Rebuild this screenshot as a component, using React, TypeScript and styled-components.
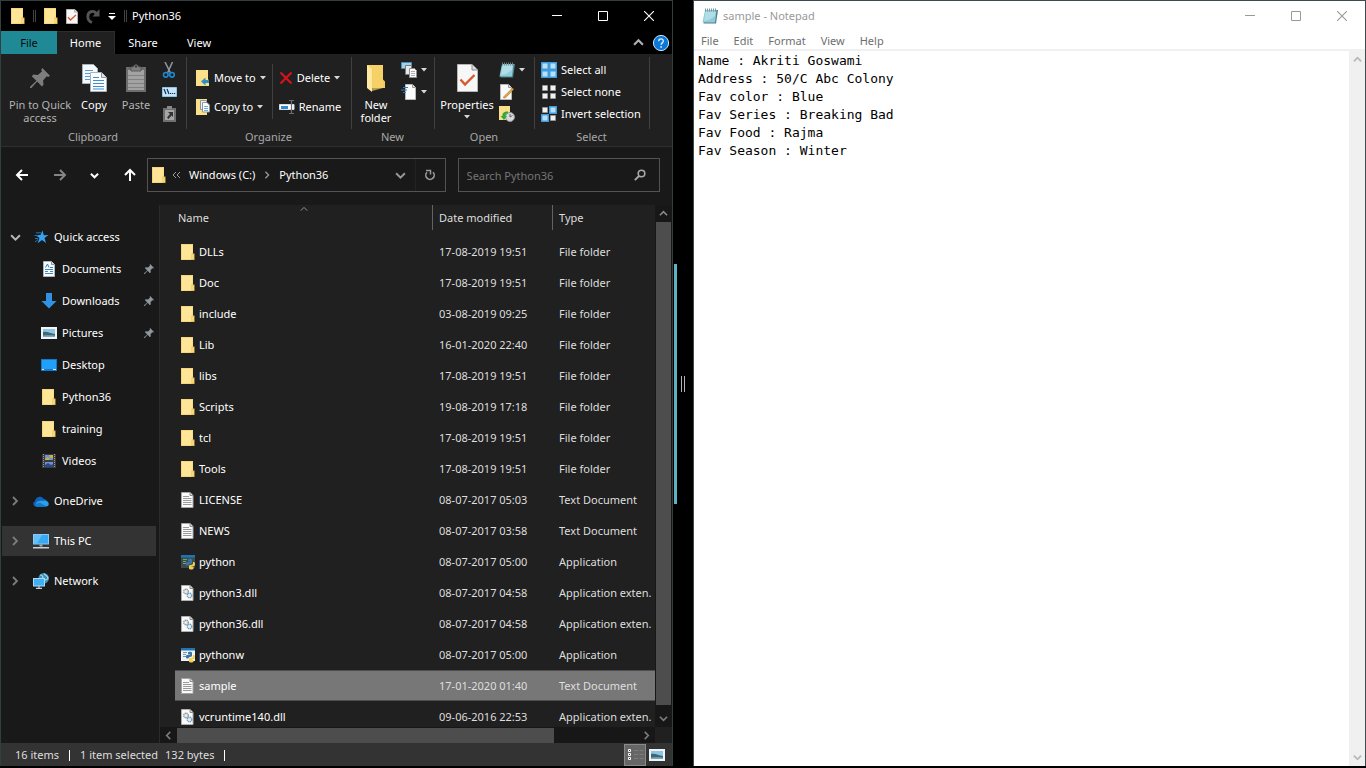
import React from "react";
import styled, { createGlobalStyle, css } from "styled-components";

const Global = createGlobalStyle`
  *, *::before, *::after { box-sizing: border-box; }
  body { margin: 0; background: #000; }
  button, input, textarea { font: inherit; color: inherit; }
  button { border: 0; padding: 0; background: none; }
  svg { display: block; flex: none; }
`;

/* ---------- desktop ---------- */

const Desktop = styled.main`
  display: grid;
  grid-template-columns: minmax(0, 1fr) 20px minmax(0, 1fr);
  height: 100vh;
  padding-bottom: 2px;
  background: #000;
  font-family: "Noto Sans", "Open Sans", sans-serif;
  font-size: 11px;
  line-height: 16px;
`;

const Splitter = styled.div`
  display: flex;
  align-items: center;
  gap: 4px;
  padding: 2px 0 0 1px;
`;
const SplitterTrack = styled.span`
  width: 3px;
  height: 240px;
  background: #5cb3c4;
`;
const SplitterGrip = styled.span`
  width: 4px;
  height: 16px;
  border: solid #b4b4b4;
  border-width: 0 1px;
`;

const WindowControls = styled.div`
  display: flex;
  align-self: stretch;
  margin-left: auto;
`;
const ControlButton = styled.button`
  display: grid;
  place-items: center;
  width: 46px;
`;

/* ---------- explorer ---------- */

const Explorer = styled.section`
  display: flex;
  flex-direction: column;
  min-height: 0;
  border: solid #343e40;
  border-width: 1px 1px 0;
  background: #191919;
  color: #fff;
`;

const TitleBar = styled.header`
  display: flex;
  align-items: center;
  height: 30px;
  flex: none;
  padding-left: 10px;
  background: #000;
`;
const TitleText = styled.h1`
  margin: 0 0 0 5px;
  font-size: 11px;
  font-weight: 400;
`;
const QuickTools = styled.div`
  display: flex;
  align-items: center;
  gap: 8px;
`;
const ToolButton = styled.button`
  display: grid;
  place-items: center;
`;
const TitleDivider = styled.span`
  width: 3px;
  height: 12px;
  border: solid #444;
  border-width: 0 1px;
`;

const TabRow = styled.nav`
  display: flex;
  align-items: stretch;
  height: 23px;
  flex: none;
  background: #000;
`;
const Tab = styled.button<{ $kind?: "file" | "active" }>`
  width: ${(p) => (p.$kind === "active" ? 58 : 56)}px;
  ${(p) =>
    p.$kind === "file" &&
    css`
      background: #1f8a96;
      color: #0a0a0a;
    `}
  ${(p) =>
    p.$kind === "active" &&
    css`
      background: #202020;
      border: solid #2d2d2d;
      border-width: 1px 1px 0 0;
    `}
`;
const TabTools = styled.div`
  display: flex;
  align-items: center;
  gap: 8px;
  margin-left: auto;
  padding-right: 2px;
`;

const Ribbon = styled.div`
  display: flex;
  height: 93px;
  flex: none;
  padding-top: 3px;
  background: #202020;
  border-bottom: 1px solid #2e2e2e;
`;
const RibbonGroup = styled.section<{ $width: number }>`
  display: flex;
  flex-direction: column;
  width: ${(p) => p.$width}px;
  flex: none;
`;
const GroupBody = styled.div<{ $pad?: number }>`
  display: flex;
  height: 72px;
  padding-left: ${(p) => p.$pad ?? 0}px;
  border-right: 1px solid #404040;
`;
const GroupLabel = styled.h2`
  margin: 0;
  padding-right: 2px;
  font-size: 11px;
  font-weight: 400;
  text-align: center;
  color: #a8a8a8;
`;
const LargeButton = styled.button<{ $width: number; $dim?: boolean }>`
  display: flex;
  flex-direction: column;
  align-items: center;
  width: ${(p) => p.$width}px;
  padding-top: 5px;
  line-height: 13px;
  color: ${(p) => (p.$dim ? "#b4b4b4" : "#fff")};
  white-space: nowrap;
`;
const LargeIcon = styled.span`
  display: grid;
  place-items: center;
  width: 32px;
  height: 32px;
  margin-bottom: 4px;
`;
const LargeDrop = styled.span`
  padding-top: 4px;
`;
const SmallColumn = styled.div<{ $gap?: number; $inset?: number }>`
  display: flex;
  flex-direction: column;
  gap: ${(p) => p.$gap ?? 4}px;
  padding: ${(p) => (p.$gap ? 12 : 4)}px 0 0 ${(p) => p.$inset ?? 6}px;
`;
const SmallButton = styled.button`
  display: flex;
  align-items: center;
  gap: 4px;
  height: 18px;
  white-space: nowrap;
`;
const InnerDivider = styled.span`
  width: 1px;
  height: 55px;
  margin: 7px 0 0 6px;
  background: #404040;
`;

const AddressRow = styled.div`
  display: flex;
  align-items: center;
  height: 58px;
  flex: none;
  padding: 0 12px 2px 14px;
`;
const History = styled.div`
  display: flex;
  align-items: center;
  justify-content: space-between;
  width: 122px;
  margin-right: 10px;
  flex: none;
`;
const AddressBar = styled.div`
  display: flex;
  align-items: center;
  flex: 299 1 0;
  min-width: 0;
  height: 34px;
  border: 1px solid #535353;
`;
const Crumbs = styled.nav`
  display: flex;
  align-items: center;
  gap: 8px;
  flex: 1;
  margin-left: 4px;
`;
const CrumbTrail = styled.span`
  display: flex;
  align-items: center;
  gap: 6px;
`;
const Crumb = styled.a`
  color: #fff;
  text-decoration: none;
  white-space: nowrap;
`;
const AddressTool = styled.button<{ $divided?: boolean }>`
  display: grid;
  place-items: center;
  width: 30px;
  height: 32px;
  border-left: 1px solid ${(p) => (p.$divided ? "#232323" : "transparent")};
`;
const SearchBox = styled.label`
  display: flex;
  align-items: center;
  flex: 202 1 0;
  min-width: 0;
  height: 34px;
  margin-left: 12px;
  border: 1px solid #535353;
`;
const SearchInput = styled.input`
  flex: 1;
  min-width: 0;
  height: 32px;
  padding: 0 0 0 8px;
  border: 0;
  outline: 0;
  background: none;
  &::placeholder { color: #767676; opacity: 1; }
`;
const SearchMark = styled.span`
  margin-right: 13px;
`;

const Body = styled.div`
  display: flex;
  flex: 1;
  min-height: 0;
`;
const Sidebar = styled.nav`
  display: flex;
  flex-direction: column;
  gap: 10px;
  width: 159px;
  flex: none;
  padding: 17px 3px 0 1px;
  border-right: 1px solid #2b2b2b;
`;
const SideGroup = styled.ul`
  display: flex;
  flex-direction: column;
  gap: 2px;
  margin: 0;
  padding: 0;
  list-style: none;
`;
const SideLink = styled.a<{ $nested?: boolean; $selected?: boolean }>`
  display: flex;
  align-items: center;
  height: 30px;
  padding-left: ${(p) => (p.$nested ? 39 : 7)}px;
  background: ${(p) => (p.$selected ? "#333" : "none")};
  color: #fff;
  text-decoration: none;
`;
const SideChevron = styled.span`
  display: grid;
  place-items: center;
  width: 12px;
  margin-right: 12px;
`;
const SideName = styled.span`
  flex: 1;
  margin-left: 5px;
`;
const PinSlot = styled.span`
  margin-right: 2px;
`;

const FilePane = styled.div`
  display: flex;
  flex-direction: column;
  flex: 1;
  min-width: 0;
  background: #202020;
`;
const FileArea = styled.div`
  display: flex;
  flex: 1;
  min-height: 0;
`;
const FileScroll = styled.div`
  flex: 1;
  min-width: 0;
  overflow: hidden;
  padding-left: 15px;
`;
const FileTable = styled.table`
  width: 100%;
  table-layout: fixed;
  border-collapse: collapse;
`;
const HeadCell = styled.th<{ $width?: number }>`
  width: ${(p) => (p.$width ? `${p.$width}px` : "auto")};
  height: 31px;
  padding: 0;
  vertical-align: top;
  font-weight: 400;
  text-align: left;
  color: #dedede;
`;
const HeadInner = styled.div<{ $first?: boolean }>`
  position: relative;
  height: 25px;
  padding-left: ${(p) => (p.$first ? 2 : 6)}px;
  border-left: 1px solid ${(p) => (p.$first ? "transparent" : "#636363")};
  line-height: 25px;
`;
const SortMark = styled.span`
  position: absolute;
  top: 0;
  left: 0;
  right: 0;
  display: flex;
  justify-content: center;
`;
const FileRow = styled.tr<{ $selected?: boolean }>`
  height: 31px;
  background: ${(p) => (p.$selected ? "#777" : "none")};
  box-shadow: ${(p) => (p.$selected ? "inset 0 1px #4d4d4d, inset 0 -1px #4d4d4d" : "none")};
`;
const FileCell = styled.td`
  padding: 0 0 0 7px;
  overflow: hidden;
  white-space: nowrap;
  color: #dedede;
`;
const FileName = styled.span`
  display: flex;
  align-items: center;
  gap: 4px;
  margin-left: -1px;
  color: #fff;
`;

const ScrollBar = styled.div<{ $across?: boolean }>`
  display: flex;
  flex-direction: ${(p) => (p.$across ? "row" : "column")};
  flex: none;
  background: #171717;
  ${(p) =>
    p.$across
      ? css`
          height: 16px;
          margin-right: 17px;
          border-top: 1px solid #171717;
        `
      : css`
          width: 17px;
          border: solid #171717;
          border-width: 0 1px;
        `}
`;
const ScrollArrow = styled.button`
  display: grid;
  place-items: center;
  flex: 0 0 17px;
`;
const ScrollThumb = styled.span<{ $grow: number }>`
  flex: ${(p) => p.$grow} 1 0;
  background: #4d4d4d;
`;
const ScrollGap = styled.span<{ $grow: number }>`
  flex: ${(p) => p.$grow} 1 0;
`;

const StatusBar = styled.footer`
  display: flex;
  align-items: center;
  height: 23px;
  flex: none;
  padding: 1px 8px 0 14px;
  background: #333;
  color: #dedede;
`;
const StatusText = styled.span`
  margin-right: 7px;
`;
const StatusDivider = styled.span`
  width: 1px;
  height: 11px;
  margin: 0 10px 0 3px;
  background: #fff;
`;
const ViewButtons = styled.div`
  display: flex;
  align-items: center;
  gap: 3px;
  margin-left: auto;
`;
const ViewButton = styled.button<{ $active?: boolean }>`
  display: grid;
  place-items: center;
  width: ${(p) => (p.$active ? 22 : 15)}px;
  height: 22px;
  border: ${(p) => (p.$active ? "1px solid #8a8a8a" : "0")};
  background: ${(p) => (p.$active ? "#666" : "none")};
`;

/* ---------- notepad ---------- */

const Notepad = styled.section`
  display: flex;
  flex-direction: column;
  min-height: 0;
  border: solid #3c4c4e;
  border-width: 1px 1px 0;
  background: #fff;
  color: #6e6e6e;
`;
const NotepadTitle = styled.header`
  display: flex;
  align-items: center;
  height: 30px;
  flex: none;
  padding-left: 8px;
  color: #999;
`;
const MenuBar = styled.nav`
  display: flex;
  gap: 15px;
  height: 20px;
  flex: none;
  padding: 1px 0 0 7px;
  border-bottom: 2px solid #f0f0f0;
`;
const NoteTitleText = styled.h1`
  margin: 0 0 0 5px;
  font-size: 11px;
  font-weight: 400;
`;
const NoteBody = styled.div`
  display: flex;
  flex: 1;
  min-height: 0;
`;
const NoteText = styled.textarea`
  flex: 1;
  min-width: 0;
  padding: 1px 4px 0;
  border: 0;
  outline: 0;
  resize: none;
  overflow: hidden;
  background: #fff;
  color: #000;
  font-family: "DejaVu Sans Mono", "Liberation Mono", monospace;
  font-size: 13px;
  line-height: 18px;
`;
const NoteScroll = styled.div`
  display: flex;
  flex-direction: column;
  justify-content: space-between;
  width: 16px;
  flex: none;
  background: #f0f0f0;
`;

/* ---------- icons ---------- */

const Folder = () => (
  <svg width="14" height="16" viewBox="0 0 14 16">
    <path d="M0 0h12v16H0z" fill="#f6d678" />
    <path d="M1 1h10.500v14H1z" fill="#ffe597" />
    <path d="M10.500 9.500h3V16h-3z" fill="#e9bf4c" />
    <path d="M12 10.500V15" stroke="#ffeeb0" strokeWidth="1" />
  </svg>
);

const BigFolder = () => (
  <svg width="20" height="28" viewBox="0 0 20 28">
    <path d="M1 1h16v14.500l2 2V24H5z" fill="#f3cc60" />
    <path d="M7 5l-1 22 11-3V1H1z" fill="#f7d36b" opacity=".7" />
    <path d="M1 1l5 4v23l-5-4z" fill="#ffe9a0" />
  </svg>
);

const CheckPage = ({ w, h }: { w: number; h: number }) => (
  <svg width={w} height={h} viewBox="0 0 21 28" preserveAspectRatio="none">
    <path d="M.5.5H15l5.500 5.500v21.500H.5z" fill="#f7f7f7" stroke="#b5b5b5" />
    <path d="M15 .5V6h5.500" fill="#dcdcdc" stroke="#8c8c8c" />
    <path d="M3.500 15.500L8 20.500 17.500 11" fill="none" stroke="#d9582b" strokeWidth="2.400" />
  </svg>
);

const Redo = () => (
  <svg width="14" height="16" viewBox="0 0 14 16">
    <path d="M10.500 6C8 1.800 1.800 3 1.800 8.500c0 2.800 1.500 5 4.200 6" fill="none" stroke="#555" strokeWidth="2.800" />
    <path d="M13.500 1v7.500H6.500z" fill="#555" />
  </svg>
);

const MoreMark = () => (
  <svg width="8" height="8" viewBox="0 0 8 8">
    <path d="M1 1.500h6" stroke="#fff" />
    <path d="M0 4h8L4 8z" fill="#fff" />
  </svg>
);

const Drop = () => (
  <svg width="6" height="4" viewBox="0 0 6 4">
    <path d="M0 0h6L3 3.500z" fill="#d8d8d8" />
  </svg>
);

const Minimize = ({ color }: { color: string }) => (
  <svg width="10" height="10" viewBox="0 0 10 10">
    <path d="M0 4.500h10" stroke={color} />
  </svg>
);
const Maximize = ({ color }: { color: string }) => (
  <svg width="10" height="10" viewBox="0 0 10 10">
    <path d="M.5.5h9v9h-9z" fill="none" stroke={color} />
  </svg>
);
const Close = ({ color }: { color: string }) => (
  <svg width="10" height="10" viewBox="0 0 10 10">
    <path d="M0 0l10 10M10 0L0 10" stroke={color} strokeWidth="1.100" />
  </svg>
);

const turns = { up: 0, right: 90, down: 180, left: 270 };
const Chevron = ({
  to,
  color,
  size = 9,
  weight = 1.8,
}: {
  to: keyof typeof turns;
  color: string;
  size?: number;
  weight?: number;
}) => (
  <svg width={size} height={size} viewBox="0 0 10 10">
    <path d="M1 7l4-4 4 4" fill="none" stroke={color} strokeWidth={weight} transform={`rotate(${turns[to]} 5 5)`} />
  </svg>
);

const Help = () => (
  <svg width="18" height="18" viewBox="0 0 18 18">
    <circle cx="9" cy="9" r="7.600" fill="#0a78d6" stroke="#cfe6f7" strokeWidth="1" />
    <path d="M6.700 7.200c0-3 4.600-3 4.600-.2 0 1.900-2.200 1.900-2.200 3.700" fill="none" stroke="#d8ecfa" strokeWidth="1.400" />
    <circle cx="9.100" cy="12.900" r=".9" fill="#d8ecfa" />
  </svg>
);

const pinShape = "M12.300 0L20 7.800l-1.800 1.100-1.500-.6-3.600 4.100.4 4.300-1.600 1.700-4.700-4.800L1.400 20 0 20l.1-1.300 6.300-5.900L1.700 8.200l1.800-1.600 4.300.5 4.100-3.600-.6-1.800z";
const Pin = ({ size, color }: { size: number; color: string }) => (
  <svg width={size} height={size} viewBox="0 0 20 20">
    <path d={pinShape} fill={color} />
  </svg>
);

const CopyPages = () => (
  <svg width="25" height="28" viewBox="0 0 25 28">
    <path d="M.5.5h11l4 4v15H.5z" fill="#f4f8fb" stroke="#aab2b8" />
    <path d="M3 6.500h8M3 9.500h8M3 12.500h5M3 15.500h5" stroke="#5a9bd0" />
    <path d="M8.500 8.500h11l5 5v14h-16z" fill="#fafcfe" stroke="#aab2b8" />
    <path d="M19.500 8.500v5h5" fill="#dde3e8" stroke="#90989e" />
    <path d="M11 13.500h6M11 16.500h11M11 19.500h11M11 22.500h11M11 25h11" stroke="#3f8fd0" />
  </svg>
);

const Clipboard = () => (
  <svg width="20" height="28" viewBox="0 0 20 28">
    <path d="M0 3h20v25H0z" fill="#6d6d6d" />
    <path d="M2 6h16v20H2z" fill="#a2a2a2" />
    <path d="M2 11.500h16M2 15.500h16M2 19.500h16M2 23.500h16" stroke="#828282" />
    <path d="M5 3h2.500C8 0 12 0 12.500 3H15v4H5z" fill="#7f7f7f" stroke="#5a5a5a" />
    <circle cx="10" cy="2.500" r="1" fill="#222" />
  </svg>
);

const Scissors = () => (
  <svg width="14" height="16" viewBox="0 0 14 16">
    <path d="M3 0l5.500 11M10.500 0L5.500 11" stroke="#8e9aa3" strokeWidth="1.500" />
    <circle cx="3.800" cy="12.800" r="2.300" fill="none" stroke="#1e87d2" strokeWidth="1.600" />
    <circle cx="10" cy="12.800" r="2.300" fill="none" stroke="#1e87d2" strokeWidth="1.600" />
  </svg>
);
const PathIcon = () => (
  <svg width="15" height="10" viewBox="0 0 15 10">
    <path d="M.5.500h14v9H.5z" fill="#c3e4fa" stroke="#8dc5ea" />
    <path d="M2 2l2 5M5 2l2 5" stroke="#12324a" strokeWidth="1.200" />
    <path d="M8 6.500h1.200M10 6.500h1.200M12 6.500h1.200" stroke="#12324a" strokeWidth="1.200" />
  </svg>
);
const ShortcutPaste = () => (
  <svg width="14" height="16" viewBox="0 0 14 16">
    <path d="M1 2h13v14H1z" fill="#6f6f6f" />
    <path d="M5 0h5v3H5z" fill="#898989" />
    <path d="M3 4h9v10H3z" fill="#a6a6a6" />
    <path d="M6 6h5v5L9.500 9.500 6.500 13 5 11.500 8 8z" fill="#333" />
  </svg>
);

const FolderArrow = () => (
  <svg width="14" height="16" viewBox="0 0 14 16">
    <path d="M0 0h12v9l1 2v5H0z" fill="#fbe08c" />
    <path d="M5 11.500L9.500 7.500v2.500H13v3H9.500v2.500z" fill="#2e8fc4" />
  </svg>
);
const FolderCopy = () => (
  <svg width="14" height="16" viewBox="0 0 14 16">
    <path d="M0 0h11v16H0z" fill="#fbe08c" />
    <path d="M4.500 1.500h6v9h-6z" fill="#eef4f8" stroke="#8c969c" />
    <path d="M6.500 3.500h4.500l2.500 2.500v7h-7z" fill="#fff" stroke="#8c969c" />
    <path d="M8 7.500h4M8 9.500h4M8 11.500h4" stroke="#4b97cf" strokeWidth=".8" />
  </svg>
);
const Cross = () => (
  <svg width="14" height="14" viewBox="0 0 14 14">
    <path d="M1.500 1.500l11 11M12.500 1.500l-11 11" stroke="#d8121c" strokeWidth="2.200" />
  </svg>
);
const RenameIcon = () => (
  <svg width="16" height="16" viewBox="0 0 16 16">
    <path d="M.5 5.500h14.500v5H.5z" fill="#fff" stroke="#d5dde2" />
    <path d="M2 7h7v3H2z" fill="#2f8bd2" />
    <path d="M10 1.500h5M10 14.500h5M12.500 1.500v13" stroke="#6d6d6d" strokeWidth="1.200" />
  </svg>
);
const NewItem = () => (
  <svg width="16" height="16" viewBox="0 0 16 16">
    <path d="M.5.5h10v6H.5z" fill="#9fd0ee" stroke="#4e8fb6" />
    <path d="M4.500 3.500h6v9h-6z" fill="#e8e8e8" stroke="#7a7a7a" />
    <path d="M8.500 6.500h5l2 2v7h-7z" fill="#fafafa" stroke="#909090" />
    <path d="M10 9.500h4M10 11.500h4M10 13.500h4" stroke="#9a9a9a" strokeWidth=".8" />
  </svg>
);
const EasyAccess = () => (
  <svg width="16" height="16" viewBox="0 0 16 16">
    <path d="M4.500.5h7l3 3v12h-10z" fill="#fbfbfb" stroke="#b8b8b8" />
    <path d="M11.500.5v3h3" fill="#ddd" stroke="#999" />
    <path d="M2 3.500h5M0 6h6M2 8.500h3" stroke="#2a7fc4" strokeWidth="1.200" />
  </svg>
);
const NotepadIcon = () => (
  <svg width="16" height="16" viewBox="0 0 16 16">
    <path d="M4 2h12l-2 13.500H1.500z" fill="#4d7f8a" />
    <path d="M3 2h11.500l-1.500 12.500H.5z" fill="#8fcbd9" />
    <path d="M3.500 3.500h10L13 8 7 12 2 13z" fill="#bfe4ec" opacity=".7" />
    <path d="M3.500 .5v3M5.500 .5v3M7.500 .5v3M9.500 .5v3M11.500 .5v3M13.500 .5v3" stroke="#6f8e96" strokeWidth=".9" />
  </svg>
);
const EditPage = () => (
  <svg width="15" height="16" viewBox="0 0 15 16">
    <path d="M1.500.5h8l3 3v12h-11z" fill="#fafafa" stroke="#b8b8b8" />
    <path d="M9.500.5v3h3" fill="#ddd" stroke="#999" />
    <path d="M5 12.500L13.500 4l1.200 1.300L6.500 13.800 4.500 14z" fill="#e6a53a" stroke="#a46f2b" strokeWidth=".6" />
  </svg>
);
const HistoryIcon = () => (
  <svg width="16" height="16" viewBox="0 0 16 16">
    <path d="M0 0h11v14H0z" fill="#fbe08c" />
    <circle cx="11" cy="11" r="4.500" fill="#d6dadd" stroke="#8d9498" />
    <path d="M11 8v3l2.500-1.500" fill="none" stroke="#555" strokeWidth=".9" />
    <path d="M9 5.500C5 5 3 7.500 3.500 10H1.500L5 14l3-4H6.500C6.500 8 7.500 7.500 9 7.500z" fill="#35a83a" />
  </svg>
);

const Tiles = ({ on }: { on: number[] }) => (
  <svg width="16" height="16" viewBox="0 0 16 16">
    {[0, 1, 2, 3].map((i) => {
      const x = (i % 2) * 8;
      const y = Math.floor(i / 2) * 8;
      const lit = on.includes(i);
      return lit ? (
        <g key={i}>
          <path d={`M${x} ${y}h8v8h-8z`} fill="#3f9bdb" />
          <path d={`M${x + 1.5} ${y + 1.5}h5v5h-5z`} fill="#b9e0fa" />
        </g>
      ) : (
        <path key={i} d={`M${x + 1.5} ${y + 1.5}h5v5h-5z`} fill="#f2f2f2" stroke="#9a9a9a" strokeWidth=".8" />
      );
    })}
  </svg>
);

const Arrow = ({ turn = 0, color = "#fff" }: { turn?: number; color?: string }) => (
  <svg width="14" height="14" viewBox="0 0 14 14">
    <path d="M13 7H2M7 2L2 7l5 5" fill="none" stroke={color} strokeWidth="2" transform={`rotate(${turn} 7 7)`} />
  </svg>
);
const DoubleLeft = () => (
  <svg width="9" height="8" viewBox="0 0 9 8">
    <path d="M4 1L1 4l3 3M8 1L5 4l3 3" fill="none" stroke="#9a9a9a" />
  </svg>
);
const Refresh = () => (
  <svg width="12" height="12" viewBox="0 0 12 12">
    <path d="M9 3.200A4.200 4.200 0 1 1 3 3.200" fill="none" stroke="#9a9a9a" strokeWidth="1.600" />
    <path d="M2 1.500h4.500v4" fill="none" stroke="#9a9a9a" strokeWidth="1.500" />
  </svg>
);
const Magnifier = () => (
  <svg width="12" height="12" viewBox="0 0 12 12">
    <circle cx="7.500" cy="4.500" r="3.300" fill="none" stroke="#a8a8a8" strokeWidth="1.600" />
    <path d="M5 7L.8 11.200" stroke="#a8a8a8" strokeWidth="1.900" />
  </svg>
);

const Star = () => (
  <svg width="16" height="16" viewBox="0 0 16 16">
    <path d="M9.500 1.500l1.300 4.700 4.700-.2-4 2.900 1.500 5.100-4-3-4.300 3.300 1.700-5.200L2.600 6l4.900.1z" fill="#35a3f1" />
    <path d="M3 3.800h5M1.500 6.500h4M2 9.500h3M2 13l3-2.500" stroke="#2277b5" strokeWidth="1" />
  </svg>
);
const DocumentsIcon = () => (
  <svg width="16" height="16" viewBox="0 0 16 16">
    <path d="M2.500.5h8l3 3v12h-11z" fill="#fafafa" stroke="#aeb4b8" />
    <path d="M10.500.5v3h3" fill="#ddd" stroke="#8e9498" />
    <path d="M4.500 6.500L6.500 3l1.500 3.500M9 6.500h3" fill="none" stroke="#2c86c4" />
    <path d="M4 8.500h8M4 10.500h3M9 10.500h3M4 12.500h8" stroke="#3c8cc4" />
  </svg>
);
const DownloadIcon = () => (
  <svg width="16" height="16" viewBox="0 0 16 16">
    <path d="M5 0h6v8h4.500L8 15.500.5 8H5z" fill="#3192e4" />
  </svg>
);
const PictureIcon = () => (
  <svg width="16" height="12" viewBox="0 0 16 12">
    <path d="M0 0h16v12H0z" fill="#f2f5f7" />
    <path d="M2 2h12v8H2z" fill="#8ec4e6" />
    <path d="M2 5c4-1 8 2 12 2v3H2z" fill="#3c6a70" />
    <path d="M2 8.500c4 0 8-.5 12 .3V10H2z" fill="#7aa8bd" />
  </svg>
);
const DesktopIcon = () => (
  <svg width="16" height="12" viewBox="0 0 16 12">
    <path d="M0 0h16v12H0z" fill="#1678c8" />
    <path d="M1 1h14v9H1z" fill="#1ea0fb" />
    <path d="M1 10.500h2M12 10.500h3" stroke="#cdeaff" />
  </svg>
);
const VideoIcon = () => (
  <svg width="16" height="16" viewBox="0 0 16 16">
    <path d="M1 1h14v14H1z" fill="#3b3b3b" />
    <path d="M2.500 1v14M13.500 1v14" stroke="#9a9a9a" strokeDasharray="1 1" />
    <path d="M4 2h8v5H4zM4 9h8v5H4z" fill="#6e8fd0" />
    <path d="M8 2h4v3H9zM4 6l3-2 2 3H4z" fill="#c2b04a" />
    <path d="M4 12l3-2 3 2 2-1v3H4z" fill="#2b4a8a" />
  </svg>
);
const CloudIcon = () => (
  <svg width="16" height="11" viewBox="0 0 16 11">
    <path d="M3 10.500C0 10.500-.8 6.500 2 5.300 2.500 1 8-.8 10.500 2.800 13 3 14 5 14 6l-3 4.500z" fill="#0f62b5" />
    <path d="M3.500 10.500C2 9 3 7 4.500 5.500 8 4 10 5 12 4.800c4.500 0 5 5.700 1 5.700z" fill="#2aa0ea" />
    <path d="M2 10.300C3 7 7 6 8.500 7.500l5 3z" fill="#1479cf" />
  </svg>
);
const PcIcon = () => (
  <svg width="16" height="16" viewBox="0 0 16 16">
    <path d="M0 1h16v10.500H0z" fill="#86c9f2" />
    <path d="M1 2h14v8.500H1z" fill="#3aa9f3" />
    <path d="M1 2h8L4 10.500H1z" fill="#63c0fa" />
    <path d="M6.500 11.500h3v2h-3z" fill="#9fb3bf" />
    <path d="M0 14h16v1.500H0z" fill="#c7d3da" />
  </svg>
);
const NetworkIcon = () => (
  <svg width="16" height="16" viewBox="0 0 16 16">
    <circle cx="10.700" cy="5.300" r="5.300" fill="#3d8fb5" />
    <path d="M7 2c2 0 3 1 3 3M11 .5c1 2 4 2 4 5M9 8c3 0 4-2 6-2" fill="none" stroke="#a6dbe8" strokeWidth="1.200" />
    <path d="M0 5h12v8.500H0z" fill="#a8dcf9" />
    <path d="M1 6h10v6.500H1z" fill="#3faef5" />
    <path d="M6 13v2M3 15.300h6" stroke="#c4d2da" strokeWidth="1.200" />
  </svg>
);

const TextDoc = () => (
  <svg width="14" height="16" viewBox="0 0 14 16">
    <path d="M.5.500h8.500l3 3v12H.5z" fill="#fafafa" stroke="#a6a6a6" />
    <path d="M9 .5v3h3" fill="#ddd" stroke="#8a8a8a" />
    <path d="M2 4.500h6M2 6.500h8.500M2 8.500h8.500M2 10.500h8.500M2 12.500h8.500" stroke="#8f8f8f" strokeWidth=".9" />
  </svg>
);
const DllDoc = () => (
  <svg width="14" height="16" viewBox="0 0 14 16">
    <path d="M.5.500h8.500l3 3v12H.5z" fill="#fafafa" stroke="#b0b0b0" />
    <path d="M9 .5v3h3" fill="#ddd" stroke="#8a8a8a" />
    <circle cx="5" cy="6.500" r="2.300" fill="#e6ebee" stroke="#82919b" strokeWidth="1.300" strokeDasharray="1.200 .5" />
    <circle cx="8.500" cy="10.500" r="2.300" fill="#dcebf5" stroke="#7199b6" strokeWidth="1.300" strokeDasharray="1.200 .5" />
  </svg>
);
const PythonApp = ({ light }: { light?: boolean }) => (
  <svg width="14" height="16" viewBox="0 0 14 16">
    <path d="M0 1h14v13H0z" fill={light ? "#f1f4f6" : "#3d4a4e"} />
    <path d="M0 1h14v2.500H0z" fill="#1a76b4" />
    <path d="M2 5.500h4M2 7.500h3M2 9.500h3" stroke={light ? "#7e95a6" : "#68a86a"} />
    <path d="M7 5.500C7 4.500 11 4.500 11 5.500V9c0 1-3.500 .5-3.500 2.500H6C4.500 11 4.500 8 6 8h3V7.500H7z" fill="#3a77a8" />
    <path d="M12 8h1c1.300 0 1.300 4 0 4h-2.500v.5h2v2c0 1.300-4.500 1.300-4.500 0V12c0-1.500 4-.5 4-2.500z" fill="#f5d04c" />
  </svg>
);
const DetailsView = () => (
  <svg width="18" height="14" viewBox="0 0 18 14">
    <path d="M2.500 1.500h2v2h-2zM2.500 5.500h2v2h-2zM2.500 9.500h2v2h-2z" fill="#333" stroke="#fff" />
    <path d="M8 2.500h4M13.500 2.500h4M8 6.500h4M13.500 6.500h4M8 10.500h4M13.500 10.500h4" stroke="#7c7c7c" />
  </svg>
);

/* ---------- data ---------- */

type FileKind = "folder" | "text" | "python" | "pythonw" | "dll";
const files: { name: string; date: string; type: string; kind: FileKind; selected?: boolean }[] = [
  { name: "DLLs", date: "17-08-2019 19:51", type: "File folder", kind: "folder" },
  { name: "Doc", date: "17-08-2019 19:51", type: "File folder", kind: "folder" },
  { name: "include", date: "03-08-2019 09:25", type: "File folder", kind: "folder" },
  { name: "Lib", date: "16-01-2020 22:40", type: "File folder", kind: "folder" },
  { name: "libs", date: "17-08-2019 19:51", type: "File folder", kind: "folder" },
  { name: "Scripts", date: "19-08-2019 17:18", type: "File folder", kind: "folder" },
  { name: "tcl", date: "17-08-2019 19:51", type: "File folder", kind: "folder" },
  { name: "Tools", date: "17-08-2019 19:51", type: "File folder", kind: "folder" },
  { name: "LICENSE", date: "08-07-2017 05:03", type: "Text Document", kind: "text" },
  { name: "NEWS", date: "08-07-2017 03:58", type: "Text Document", kind: "text" },
  { name: "python", date: "08-07-2017 05:00", type: "Application", kind: "python" },
  { name: "python3.dll", date: "08-07-2017 04:58", type: "Application exten.", kind: "dll" },
  { name: "python36.dll", date: "08-07-2017 04:58", type: "Application exten.", kind: "dll" },
  { name: "pythonw", date: "08-07-2017 05:00", type: "Application", kind: "pythonw" },
  { name: "sample", date: "17-01-2020 01:40", type: "Text Document", kind: "text", selected: true },
  { name: "vcruntime140.dll", date: "09-06-2016 22:53", type: "Application exten.", kind: "dll" },
];

const fileIcons: Record<FileKind, React.ReactNode> = {
  folder: <Folder />,
  text: <TextDoc />,
  python: <PythonApp />,
  pythonw: <PythonApp light />,
  dll: <DllDoc />,
};

const FolderSlot = styled.span`
  display: grid;
  place-items: center;
  width: 16px;
`;

const pinnedPlaces = [
  { name: "Documents", icon: <DocumentsIcon />, pinned: true },
  { name: "Downloads", icon: <DownloadIcon />, pinned: true },
  { name: "Pictures", icon: <PictureIcon />, pinned: true },
  { name: "Desktop", icon: <DesktopIcon /> },
  { name: "Python36", icon: <FolderSlot><Folder /></FolderSlot> },
  { name: "training", icon: <FolderSlot><Folder /></FolderSlot> },
  { name: "Videos", icon: <VideoIcon /> },
];

const roots = [
  { name: "OneDrive", icon: <CloudIcon /> },
  { name: "This PC", icon: <PcIcon />, selected: true },
  { name: "Network", icon: <NetworkIcon /> },
];

const note = `Name : Akriti Goswami
Address : 50/C Abc Colony
Fav color : Blue
Fav Series : Breaking Bad
Fav Food : Rajma
Fav Season : Winter`;

/* ---------- parts ---------- */

const Controls = ({ color }: { color: string }) => (
  <WindowControls>
    <ControlButton aria-label="Minimize"><Minimize color={color} /></ControlButton>
    <ControlButton aria-label="Maximize"><Maximize color={color} /></ControlButton>
    <ControlButton aria-label="Close"><Close color={color} /></ControlButton>
  </WindowControls>
);

const RibbonBar = () => (
  <Ribbon>
    <RibbonGroup $width={186}>
      <GroupBody $pad={4}>
        <LargeButton $width={70} $dim>
          <LargeIcon><Pin size={20} color="#7d7d7d" /></LargeIcon>
          <span>Pin to Quick</span>
          <span>access</span>
        </LargeButton>
        <LargeButton $width={38}>
          <LargeIcon><CopyPages /></LargeIcon>
          <span>Copy</span>
        </LargeButton>
        <LargeButton $width={46} $dim>
          <LargeIcon><Clipboard /></LargeIcon>
          <span>Paste</span>
        </LargeButton>
        <SmallColumn $inset={3}>
          <SmallButton aria-label="Cut"><Scissors /></SmallButton>
          <SmallButton aria-label="Copy path"><PathIcon /></SmallButton>
          <SmallButton aria-label="Paste shortcut"><ShortcutPaste /></SmallButton>
        </SmallColumn>
      </GroupBody>
      <GroupLabel>Clipboard</GroupLabel>
    </RibbonGroup>
    <RibbonGroup $width={165}>
      <GroupBody $pad={3}>
        <SmallColumn $gap={11}>
          <SmallButton><FolderArrow />Move to<Drop /></SmallButton>
          <SmallButton><FolderCopy />Copy to<Drop /></SmallButton>
        </SmallColumn>
        <InnerDivider />
        <SmallColumn $gap={11}>
          <SmallButton><Cross />Delete<Drop /></SmallButton>
          <SmallButton><RenameIcon />Rename</SmallButton>
        </SmallColumn>
      </GroupBody>
      <GroupLabel>Organize</GroupLabel>
    </RibbonGroup>
    <RibbonGroup $width={83}>
      <GroupBody $pad={5}>
        <LargeButton $width={38}>
          <LargeIcon><BigFolder /></LargeIcon>
          <span>New</span>
          <span>folder</span>
        </LargeButton>
        <SmallColumn>
          <SmallButton aria-label="New item"><NewItem /><Drop /></SmallButton>
          <SmallButton aria-label="Easy access"><EasyAccess /><Drop /></SmallButton>
        </SmallColumn>
      </GroupBody>
      <GroupLabel>New</GroupLabel>
    </RibbonGroup>
    <RibbonGroup $width={100}>
      <GroupBody $pad={3}>
        <LargeButton $width={58}>
          <LargeIcon><CheckPage w={21} h={28} /></LargeIcon>
          <span>Properties</span>
          <LargeDrop><Drop /></LargeDrop>
        </LargeButton>
        <SmallColumn $inset={3}>
          <SmallButton aria-label="Open"><NotepadIcon /><Drop /></SmallButton>
          <SmallButton aria-label="Edit"><EditPage /></SmallButton>
          <SmallButton aria-label="History"><HistoryIcon /></SmallButton>
        </SmallColumn>
      </GroupBody>
      <GroupLabel>Open</GroupLabel>
    </RibbonGroup>
    <RibbonGroup $width={115}>
      <GroupBody>
        <SmallColumn>
          <SmallButton><Tiles on={[0, 1, 2, 3]} />Select all</SmallButton>
          <SmallButton><Tiles on={[]} />Select none</SmallButton>
          <SmallButton><Tiles on={[1, 2]} />Invert selection</SmallButton>
        </SmallColumn>
      </GroupBody>
      <GroupLabel>Select</GroupLabel>
    </RibbonGroup>
  </Ribbon>
);

const ExplorerWindow = () => (
  <Explorer>
    <TitleBar>
      <QuickTools>
        <Folder />
        <TitleDivider />
        <ToolButton aria-label="New folder"><Folder /></ToolButton>
        <ToolButton aria-label="Properties"><CheckPage w={12} h={15} /></ToolButton>
        <ToolButton aria-label="Redo"><Redo /></ToolButton>
        <ToolButton aria-label="Customize toolbar"><MoreMark /></ToolButton>
        <TitleDivider />
      </QuickTools>
      <TitleText>Python36</TitleText>
      <Controls color="#fff" />
    </TitleBar>
    <TabRow>
      <Tab $kind="file">File</Tab>
      <Tab $kind="active">Home</Tab>
      <Tab>Share</Tab>
      <Tab>View</Tab>
      <TabTools>
        <ToolButton aria-label="Collapse ribbon"><Chevron to="up" color="#b0b0b0" size={11} weight={2} /></ToolButton>
        <ToolButton aria-label="Help"><Help /></ToolButton>
      </TabTools>
    </TabRow>
    <RibbonBar />
    <AddressRow>
      <History>
        <ToolButton aria-label="Back"><Arrow /></ToolButton>
        <ToolButton aria-label="Forward"><Arrow turn={180} color="#858585" /></ToolButton>
        <ToolButton aria-label="Recent locations"><Chevron to="down" color="#fff" size={9} weight={2.2} /></ToolButton>
        <ToolButton aria-label="Up"><Arrow turn={90} /></ToolButton>
      </History>
      <AddressBar>
        <Crumbs>
          <CrumbTrail>
            <Folder />
            <DoubleLeft />
          </CrumbTrail>
          <Crumb href="#c">Windows (C:)</Crumb>
          <Chevron to="right" color="#9a9a9a" size={8} weight={1.6} />
          <Crumb href="#python36">Python36</Crumb>
        </Crumbs>
        <AddressTool aria-label="Previous locations"><Chevron to="down" color="#989898" size={11} /></AddressTool>
        <AddressTool $divided aria-label="Refresh"><Refresh /></AddressTool>
      </AddressBar>
      <SearchBox>
        <SearchInput placeholder="Search Python36" aria-label="Search Python36" />
        <SearchMark><Magnifier /></SearchMark>
      </SearchBox>
    </AddressRow>
    <Body>
      <Sidebar>
        <SideGroup>
          <li>
            <SideLink href="#quick">
              <SideChevron><Chevron to="down" color="#b8b8b8" size={11} /></SideChevron>
              <Star />
              <SideName>Quick access</SideName>
            </SideLink>
          </li>
          {pinnedPlaces.map((p) => (
            <li key={p.name}>
              <SideLink href={`#${p.name}`} $nested>
                {p.icon}
                <SideName>{p.name}</SideName>
                {p.pinned && <PinSlot><Pin size={10} color="#8f979c" /></PinSlot>}
              </SideLink>
            </li>
          ))}
        </SideGroup>
        {roots.map((r) => (
          <SideLink key={r.name} href={`#${r.name}`} $selected={r.selected}>
            <SideChevron><Chevron to="right" color="#7c7c7c" size={10} /></SideChevron>
            {r.icon}
            <SideName>{r.name}</SideName>
          </SideLink>
        ))}
      </Sidebar>
      <FilePane>
        <FileArea>
          <FileScroll>
            <FileTable>
              <thead>
                <tr>
                  <HeadCell>
                    <HeadInner $first>
                      Name
                      <SortMark><Chevron to="up" color="#9a9a9a" size={8} weight={1.2} /></SortMark>
                    </HeadInner>
                  </HeadCell>
                  <HeadCell $width={120}><HeadInner>Date modified</HeadInner></HeadCell>
                  <HeadCell $width={103}><HeadInner>Type</HeadInner></HeadCell>
                </tr>
              </thead>
              <tbody>
                {files.map((f) => (
                  <FileRow key={f.name} $selected={f.selected}>
                    <FileCell><FileName>{fileIcons[f.kind]}{f.name}</FileName></FileCell>
                    <FileCell>{f.date}</FileCell>
                    <FileCell>{f.type}</FileCell>
                  </FileRow>
                ))}
              </tbody>
            </FileTable>
          </FileScroll>
          <ScrollBar>
            <ScrollArrow aria-label="Scroll up"><Chevron to="up" color="#8a8a8a" size={9} /></ScrollArrow>
            <ScrollThumb $grow={97} />
            <ScrollGap $grow={1} />
            <ScrollArrow aria-label="Scroll down"><Chevron to="down" color="#7c7c7c" size={9} /></ScrollArrow>
          </ScrollBar>
        </FileArea>
        <ScrollBar $across>
          <ScrollArrow aria-label="Scroll left"><Chevron to="left" color="#7c7c7c" size={9} /></ScrollArrow>
          <ScrollThumb $grow={9} />
          <ScrollGap $grow={2} />
          <ScrollArrow aria-label="Scroll right"><Chevron to="right" color="#7c7c7c" size={9} /></ScrollArrow>
        </ScrollBar>
      </FilePane>
    </Body>
    <StatusBar>
      <StatusText>16 items</StatusText>
      <StatusDivider />
      <StatusText>1 item selected</StatusText>
      <StatusText>132 bytes</StatusText>
      <StatusDivider />
      <ViewButtons>
        <ViewButton $active aria-label="Details view"><DetailsView /></ViewButton>
        <ViewButton aria-label="Thumbnail view"><PictureIcon /></ViewButton>
      </ViewButtons>
    </StatusBar>
  </Explorer>
);

const NotepadWindow = () => (
  <Notepad>
    <NotepadTitle>
      <NotepadIcon />
      <NoteTitleText>sample - Notepad</NoteTitleText>
      <Controls color="#999" />
    </NotepadTitle>
    <MenuBar>
      {["File", "Edit", "Format", "View", "Help"].map((m) => (
        <button key={m}>{m}</button>
      ))}
    </MenuBar>
    <NoteBody>
      <NoteText aria-label="Note text" defaultValue={note} spellCheck={false} />
      <NoteScroll>
        <ScrollArrow aria-label="Scroll up"><Chevron to="up" color="#b8b8b8" size={9} weight={2} /></ScrollArrow>
        <ScrollArrow aria-label="Scroll down"><Chevron to="down" color="#b8b8b8" size={9} weight={2} /></ScrollArrow>
      </NoteScroll>
    </NoteBody>
  </Notepad>
);

export default function App() {
  return (
    <>
      <Global />
      <Desktop>
        <ExplorerWindow />
        <Splitter>
          <SplitterTrack />
          <SplitterGrip />
        </Splitter>
        <NotepadWindow />
      </Desktop>
    </>
  );
}
